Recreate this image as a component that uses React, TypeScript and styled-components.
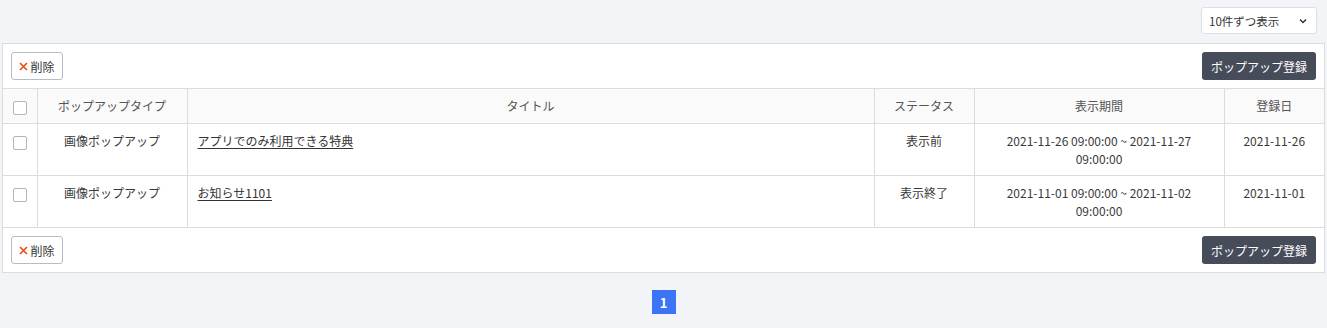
import React from "react";
import styled, { createGlobalStyle } from "styled-components";

const Global = createGlobalStyle`
  html, body { margin: 0; padding: 0; background: #f3f4f8; }
  body {
    font-family: "Noto Sans CJK JP", "Noto Sans", sans-serif;
    font-size: 12px;
    color: #333;
  }
  * { box-sizing: border-box; }
`;

const Page = styled.div`
  padding: 7px 2px 15px;
  display: flex;
  flex-direction: column;
`;

const TopBar = styled.div`
  display: flex;
  justify-content: flex-end;
  padding-right: 8px;
  margin-bottom: 9px;
`;

const SelectBox = styled.div`
  width: 116px;
  height: 27px;
  background: #fff;
  border: 1px solid #dcdfe6;
  border-radius: 3px;
  display: flex;
  align-items: center;
  justify-content: space-between;
  padding: 0 8px 0 7px;
  font-size: 11.5px;
  color: #333;
`;

const Panel = styled.div`
  background: #fff;
  border: 1px solid #dcdcdc;
`;

const Toolbar = styled.div`
  display: flex;
  justify-content: space-between;
  align-items: center;
  padding: 8px 8px;
`;

const DeleteButton = styled.button`
  height: 28px;
  width: 52px;
  padding: 0;
  background: #fff;
  border: 1px solid #b7bbc9;
  border-radius: 3px;
  font-family: inherit;
  font-size: 12px;
  color: #333;
  display: flex;
  align-items: center;
  justify-content: center;
  gap: 2px;
`;

const RegisterButton = styled.button`
  height: 28px;
  width: 114px;
  padding: 0;
  background: #464c5a;
  border: none;
  border-radius: 3px;
  color: #fff;
  font-family: inherit;
  font-size: 12px;
`;

const Table = styled.table`
  width: 100%;
  border-collapse: collapse;
  table-layout: fixed;
`;

const Th = styled.th`
  background: #fafafa;
  border: 1px solid #dcdcdc;
  font-weight: normal;
  color: #555;
  padding: 8px 10px;
  line-height: 17.5px;
  text-align: center;
  vertical-align: top;
  &:first-child { border-left: none; }
  &:last-child { border-right: none; }
`;

const Td = styled.td<{ $left?: boolean }>`
  border: 1px solid #dcdcdc;
  padding: 8px 10px;
  line-height: 17.5px;
  text-align: ${(p) => (p.$left ? "left" : "center")};
  vertical-align: top;
  color: #3a3a3a;
  &:first-child { border-left: none; }
  &:last-child { border-right: none; }
`;

const CheckCell = styled.div`
  display: flex;
  justify-content: center;
  padding-top: 4px;
`;

const Check = styled.span`
  display: block;
  width: 14px;
  height: 14px;
  border: 1px solid #b3b5c0;
  border-radius: 2px;
  background: #fff;
`;

const TitleLink = styled.a`
  color: #333;
  text-decoration: underline;
  text-underline-offset: 2px;
  cursor: pointer;
`;

const Pager = styled.div`
  display: flex;
  justify-content: center;
  margin-top: 17px;
`;

const PageNum = styled.span`
  width: 24px;
  height: 24px;
  background: #3c74f6;
  color: #fff;
  font-weight: bold;
  font-size: 13px;
  display: flex;
  align-items: center;
  justify-content: center;
`;

const rows = [
  {
    type: "画像ポップアップ",
    title: "アプリでのみ利用できる特典",
    status: "表示前",
    period: "2021-11-26 09:00:00 ~ 2021-11-27 09:00:00",
    date: "2021-11-26",
  },
  {
    type: "画像ポップアップ",
    title: "お知らせ1101",
    status: "表示終了",
    period: "2021-11-01 09:00:00 ~ 2021-11-02 09:00:00",
    date: "2021-11-01",
  },
];

const CrossIcon = () => (
  <svg width="9" height="9" viewBox="0 0 9 9">
    <path d="M1 1 L8 8 M8 1 L1 8" stroke="#ea4b14" strokeWidth="1.6" fill="none" />
  </svg>
);

const Bar = () => (
  <Toolbar>
    <DeleteButton>
      <CrossIcon />
      削除
    </DeleteButton>
    <RegisterButton>ポップアップ登録</RegisterButton>
  </Toolbar>
);

export default function App() {
  return (
    <>
      <Global />
      <Page>
        <TopBar>
          <SelectBox>
            <span>10件ずつ表示</span>
            <svg width="10" height="10" viewBox="0 0 10 10">
              <path d="M2 3.5 L5 6.5 L8 3.5" fill="none" stroke="#333" strokeWidth="1.5" />
            </svg>
          </SelectBox>
        </TopBar>
        <Panel>
          <Bar />
          <Table>
            <colgroup>
              <col style={{ width: 34 }} />
              <col style={{ width: 150 }} />
              <col />
              <col style={{ width: 100 }} />
              <col style={{ width: 250 }} />
              <col style={{ width: 100 }} />
            </colgroup>
            <thead>
              <tr>
                <Th style={{ padding: "8px 0" }}>
                  <CheckCell>
                    <Check />
                  </CheckCell>
                </Th>
                <Th>ポップアップタイプ</Th>
                <Th>タイトル</Th>
                <Th>ステータス</Th>
                <Th>表示期間</Th>
                <Th>登録日</Th>
              </tr>
            </thead>
            <tbody>
              {rows.map((r, i) => (
                <tr key={i}>
                  <Td style={{ padding: "8px 0" }}>
                    <CheckCell>
                      <Check />
                    </CheckCell>
                  </Td>
                  <Td>{r.type}</Td>
                  <Td $left>
                    <TitleLink>{r.title}</TitleLink>
                  </Td>
                  <Td>{r.status}</Td>
                  <Td>{r.period}</Td>
                  <Td>{r.date}</Td>
                </tr>
              ))}
            </tbody>
          </Table>
          <Bar />
        </Panel>
        <Pager>
          <PageNum>1</PageNum>
        </Pager>
      </Page>
    </>
  );
}
